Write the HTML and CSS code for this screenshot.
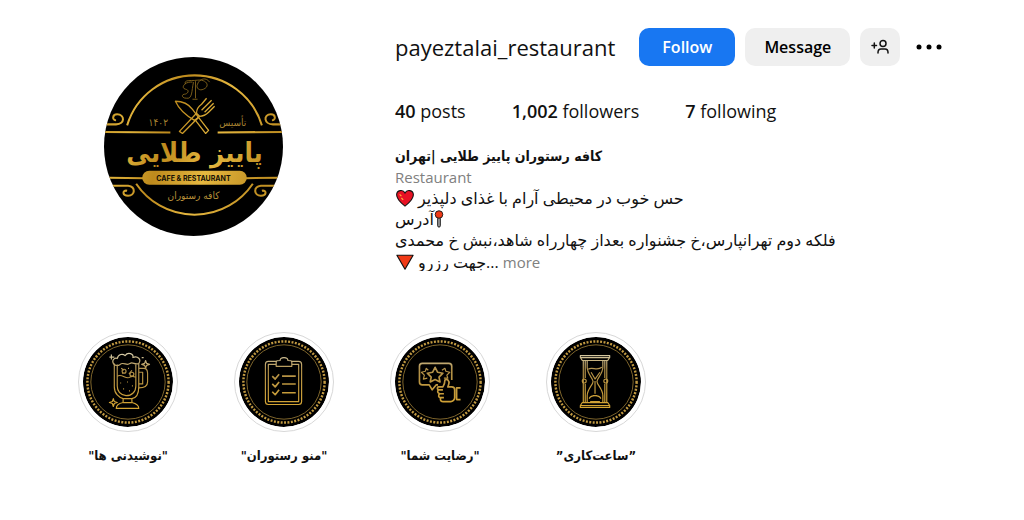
FILE: index.html
```html
<!DOCTYPE html>
<html lang="fa">
<head>
  <meta charset="UTF-8">
  <meta name="viewport" content="width=device-width, initial-scale=1">
  <title>payeztalai_restaurant</title>
  <link rel="stylesheet" href="styles.css">
</head>
<body>
  <main class="profile">
    <header class="profile-header">
      <!-- logo -->
      <a class="avatar" href="#">
        <svg viewBox="0 0 178 178" aria-hidden="true">
          <defs>
            <clipPath id="disc"><circle cx="89" cy="89" r="89"/></clipPath>
            <linearGradient id="gold" x1="0" y1="0" x2="178" y2="60" gradientUnits="userSpaceOnUse" spreadMethod="reflect">
              <stop offset="0" stop-color="#b98a1c"/>
              <stop offset=".25" stop-color="#e0b23a"/>
              <stop offset=".45" stop-color="#bd8a1d"/>
              <stop offset=".7" stop-color="#e6b840"/>
              <stop offset="1" stop-color="#c08f22"/>
            </linearGradient>
          </defs>
          <g clip-path="url(#disc)">
            <rect width="178" height="178" fill="#000"/>
            <g fill="none" stroke="url(#gold)" stroke-width="2">
              <path d="M23 68A70 70 0 0 1 157 68M32 126A70 70 0 0 0 148 126"/>
              <path d="M0 74.500L66 75M113 75L178 74.500M5 120L40 120.500M141 120.500L174 120"/>
              <path d="M0 67H12C21 67 21 57 13 57C8 57 8 63 12 63"/>
              <path d="M178 67H168C159 67 158 57 166 57C171 57 171 63 167 63"/>
              <path d="M8 128H24C32 129 31 138 24 138C18 138 18 132 23 133"/>
              <path d="M172 128H156C148 129 149 138 156 138C162 138 162 132 157 133"/>
            </g>
            <!-- knife and fork -->
            <g fill="none" stroke="url(#gold)" stroke-width="1.300" stroke-linejoin="round">
              <path d="M71 44C79 44 85 48 88 52L94 60L90 63C83 59 75 53 71 44Z"/>
              <path d="M91 63L94 60L104 73L101 76Z"/>
              <path d="M75 74L92 56L95 59L78 76Z"/>
              <path d="M92 56C92 52 94 49 97 47L102 41M95 59C99 59 102 57 104 55L110 49M97 53L107 43M100 55L109 46"/>
            </g>
            <!-- monogram -->
            <g fill="none" stroke="#93711f" stroke-width=".8">
              <path d="M81 27C79 22 87 24 93 23C102 22 106 29 99 32C95 34 91 31 93 27C95 21 102 20 105 25"/>
              <path d="M88 25C80 24 76 31 81 32C86 33 83 37 80 37C77 37 77 41 82 41C88 42 87 34 89 25M91 24V41M88 42H93"/>
            </g>
            <rect x="38" y="113" width="104" height="14" rx="7" fill="url(#gold)"/>
            <g class="logo-text" text-anchor="middle">
              <text class="logo-name" x="90" y="104">پاییز طلایی</text>
              <text class="logo-small" x="54" y="69">۱۴۰۲</text>
              <text class="logo-small" x="128" y="69">تأسیس</text>
              <text class="logo-latin" x="89" y="123">CAFE &amp; RESTAURANT</text>
              <text class="logo-sub" x="89" y="141">کافه رستوران</text>
            </g>
          </g>
        </svg>
      </a>

      <section class="info">
        <div class="title-row">
          <h1 class="username">payeztalai_restaurant</h1>
          <div class="actions">
            <button type="button" class="btn btn-follow">Follow</button>
            <button type="button" class="btn btn-message">Message</button>
            <button type="button" class="btn btn-icon" aria-label="Similar accounts">
              <svg viewBox="0 0 20 20" width="20" height="20" fill="none" stroke="#111" stroke-width="1.500" stroke-linecap="round" aria-hidden="true">
                <circle cx="13" cy="6.500" r="3"/>
                <path d="M8 16V15.500C8 13 9 12 11 12H15C17 12 18 13 18 15.500V16M2 8.500H6.500M4.300 6V11"/>
              </svg>
            </button>
          </div>
          <button type="button" class="more-options" aria-label="Options">
            <svg viewBox="0 0 26 8" width="26" height="8" aria-hidden="true">
              <circle cx="3" cy="4" r="2.500"/><circle cx="13" cy="4" r="2.500"/><circle cx="23" cy="4" r="2.500"/>
            </svg>
          </button>
        </div>

        <ul class="stats">
          <li><b>40</b> posts</li>
          <li><a href="#"><b>1,002</b> followers</a></li>
          <li><a href="#"><b>7</b> following</a></li>
        </ul>

        <div class="bio">
          <h2 class="full-name">کافه رستوران پاییز طلایی |تهران</h2>
          <p class="category">Restaurant</p>
          <p><svg class="emoji" viewBox="0 0 20 20" aria-hidden="true"><path d="M10 19C6 16 .700 11 .700 6.500C.700 1 8 .200 10 4.500C12 .200 19.300 1 19.300 6.500C19.300 11 14 16 10 19Z" fill="#e81224" stroke="#111" stroke-width="1.200"/><path d="M4 6L6 8M6 10L8 12" stroke="#ffb13b" stroke-width="1.300"/></svg>حس خوب در محیطی آرام با غذای دلپذیر</p>
          <p>آدرس<svg class="emoji emoji-pin" viewBox="0 0 10 20" aria-hidden="true"><rect x="3.500" y="8" width="3" height="11" rx="1.500" fill="#999" stroke="#111"/><circle cx="5" cy="5" r="4.200" fill="#f03a17" stroke="#111"/></svg></p>
          <p>فلکه دوم تهرانپارس،خ جشنواره بعداز چهارراه شاهد،نبش خ محمدی</p>
          <p class="last-line"><svg class="emoji" viewBox="0 0 20 20" aria-hidden="true"><path d="M1 2.500H19L10 18Z" fill="#f03a17" stroke="#111" stroke-width="1.300" stroke-linejoin="round"/></svg>جهت رزرو... <a class="more" href="#">more</a></p>
        </div>
      </section>
    </header>

    <!-- story highlights -->
    <nav class="highlights">
      <a class="highlight" href="#">
        <svg class="cover" viewBox="0 0 92 92" aria-hidden="true">
          <defs>
            <linearGradient id="shine" x1="0" y1="16" x2="0" y2="76" gradientUnits="userSpaceOnUse">
              <stop offset="0" stop-color="#d9cfae"/>
              <stop offset=".3" stop-color="#b08f48"/>
              <stop offset="1" stop-color="#d9a730"/>
            </linearGradient>
          </defs>
          <circle cx="46" cy="46" r="46"/>
          <circle class="dots" cx="46" cy="46" r="41.500"/>
          <circle class="ring" cx="46" cy="46" r="38"/>
          <g class="art">
            <path d="M32 27V51C32 58 37 62 41 63V67C36 68 34 70 34 73H57C57 70 54 68 50 67V63C55 62 57 58 57 51V27"/>
            <path d="M35 28V50C35 56 39 59 44 60C50 60 54 56 54 50V28M41 63H50M41 67H50"/>
            <path d="M57 32H62C65 32 66 34 66 37V46C66 50 63 52 57 52M57 36H61V48H57"/>
            <path d="M31 27C29 23 33 21 35 22C36 17 41 17 43 19C46 15 52 17 51 21C56 19 60 23 57 27C53 29 51 25 48 27C45 30 41 25 38 28C35 30 32 29 31 27Z"/>
            <path d="M35 40C40 37 44 44 48 41C51 39 52 41 54 41"/>
            <path d="M39 32L42 34M50 34L47 38M38 47H39M45 46H46M50 50H51M41 53H42M47 55H48M46 32H47M40 37H41"/>
            <circle cx="42" cy="35" r="2"/><circle cx="50" cy="38" r="2"/>
            <path d="M29 18V23M27 20.500H32M64 24L65 27L68 28L65 29L64 32L63 29L60 28L63 27ZM31 63L32 66L35 67L32 68L31 71L30 68L27 67L30 66ZM60 21H62"/>
          </g>
        </svg>
        <span class="label">"نوشیدنی ها"</span>
      </a>
      <a class="highlight" href="#">
        <svg class="cover" viewBox="0 0 92 92" aria-hidden="true">
          <circle cx="46" cy="46" r="46"/>
          <circle class="dots" cx="46" cy="46" r="41.500"/>
          <circle class="ring" cx="46" cy="46" r="38"/>
          <g class="art">
            <path d="M38 25H30C28 25 27 26 27 28V66C27 68 28 69 30 69H61C63 69 64 68 64 66V28C64 26 63 25 61 25H54"/>
            <path d="M38 28H30V66H61V28H54"/>
            <path d="M38 30V26C38 24 39 24 42 24C42 20 50 20 50 24C53 24 54 24 54 26V30Z"/>
            <path class="bold" d="M34 40L37 43L41 38M34 48L37 51L41 46M34 56L37 59L41 54M44 40H58M44 48H58M44 57H58"/>
          </g>
        </svg>
        <span class="label">"منو رستوران"</span>
      </a>
      <a class="highlight" href="#">
        <svg class="cover" viewBox="0 0 92 92" aria-hidden="true">
          <circle cx="46" cy="46" r="46"/>
          <circle class="dots" cx="46" cy="46" r="41.500"/>
          <circle class="ring" cx="46" cy="46" r="38"/>
          <g class="art">
            <path class="bold" d="M58 44V30C58 28 57 27 55 27H28C26 27 25 28 25 30V46C25 48 26 49 28 49H35L38 54L42 49H44"/>
            <path class="bold" d="M41 31L43.500 36L49 37L45 41L46 46L41 43.500L36 46L37 41L33 37L38.500 36Z"/>
            <path d="M34 34L32 32L31 35L27 36L30 39L29 43L33 42M48 34L51 32L52 35L56 36L53 39L54 42L50 42"/>
            <path class="bold" d="M44 51H49C51 48 51 46 51 44C53 42 56 45 55 48L54 51H58C60 51 61 52 61 54V62C61 64 59 66 57 66H49C46 66 46 63 47 62C44 62 44 59 46 58C43 57 43 55 45 54C43 54 43 52 44 51ZM45 54H49M46 58H50M47 62H50M67 52H63V64H67"/>
          </g>
        </svg>
        <span class="label">"رضایت شما"</span>
      </a>
      <a class="highlight" href="#">
        <svg class="cover" viewBox="0 0 92 92" aria-hidden="true">
          <circle cx="46" cy="46" r="46"/>
          <circle class="dots" cx="46" cy="46" r="41.500"/>
          <circle class="ring" cx="46" cy="46" r="38"/>
          <g class="art">
            <path d="M30 19H60V21L58 24H32L30 21ZM30 72H60V70L58 67H32L30 70ZM30 21H60M30 70H60"/>
            <path d="M33 24V67M35 24V42M35 48V67M55 24V42M55 48V67M57 24V67"/>
            <circle cx="34" cy="45" r="2"/><circle cx="56" cy="45" r="2"/>
            <path d="M37 24V31C37 38 43 42 43 45.500C43 49 37 53 37 60V67M53 24V31C53 38 47 42 47 45.500C47 49 53 53 53 60V67"/>
            <path d="M38 33C42 30 47 35 52 31M41 36L45 43L50 36M45 45V58M39 63C41 59 49 59 51 63M40 66H50M43 60H47"/>
          </g>
        </svg>
        <span class="label">”ساعت‌کاری”</span>
      </a>
    </nav>
  </main>
</body>
</html>
```
FILE: styles.css
```css
* {
  box-sizing: border-box;
}
body {
  margin: 0;
  background-color: #fff;
  color: #111;
  font-family: "Open Sans", "Noto Sans", "DejaVu Sans", sans-serif;
  font-size: 16px;
}
h1, h2, p, ul {
  margin: 0;
  padding: 0;
}
a {
  color: inherit;
  text-decoration: none;
}
.profile-header {
  display: flex;
  gap: 112px;
  padding: 28px 24px 0 104px;
}
.avatar {
  flex: none;
  width: 179px;
  margin-top: 29px;
}
.avatar svg {
  display: block;
  width: 100%;
}
.logo-text {
  fill: url(#gold);
  font-family: "DejaVu Sans Condensed", "DejaVu Sans", sans-serif;
}
.logo-name {
  font-size: 27px;
  font-weight: bold;
}
.logo-small {
  font-size: 10px;
  fill: #a88432;
}
.logo-sub {
  font-size: 10px;
  fill: #b8913a;
}
.logo-latin {
  font-family: Inter, "Open Sans", sans-serif;
  font-size: 7px;
  font-weight: bold;
  fill: #151005;
}
.info {
  flex: 1;
  min-width: 0;
}

/* username and buttons */
.title-row {
  display: flex;
  align-items: center;
  min-height: 38px;
}
.username {
  font-size: 22px;
  font-weight: 400;
  line-height: 38px;
}
.actions {
  display: flex;
  gap: 10px;
  margin-left: 24px;
}
button {
  border: none;
  padding: 0;
  background: none;
  cursor: pointer;
  font-family: inherit;
}
.btn {
  height: 38px;
  border-radius: 10px;
  background-color: #efefef;
  color: #000;
  font-size: 16px;
  font-weight: 600;
}
.btn-follow {
  padding: 0 23px;
  background-color: #1877f2;
  color: #fff;
}
.btn-message {
  padding: 0 19px;
}
.btn-icon {
  width: 40px;
  display: flex;
  align-items: center;
  justify-content: center;
}
.more-options {
  display: flex;
  margin-left: 16px;
}

.stats {
  display: flex;
  gap: 46px;
  margin-top: 32px;
  list-style: none;
  font-size: 18px;
  line-height: 26px;
}
.stats b {
  font-weight: 600;
}

/* bio */
.bio {
  margin-top: 21px;
  line-height: 21px;
}
.bio p {
  height: 21px;
  white-space: nowrap;
}
.full-name,
.label {
  font-family: "DejaVu Sans Condensed", "DejaVu Sans", sans-serif;
  font-weight: bold;
  line-height: 22px;
}
.full-name {
  font-size: 14px;
}
.category,
.more {
  color: #808080;
  font-size: 15px;
}
.bio .last-line {
  height: 20px;
  line-height: 22px;
  overflow: hidden;
}
.emoji {
  width: 20px;
  height: 18px;
  margin-right: 3px;
  vertical-align: -3px;
}
.emoji-pin {
  width: 10px;
  margin: 0;
}

/* highlights */
.highlights {
  display: flex;
  gap: 56px;
  padding: 61px 24px 24px 78px;
}
.highlight {
  display: flex;
  flex-direction: column;
  align-items: center;
  width: 100px;
}
.cover {
  width: 100px;
  height: 100px;
  padding: 4px;
  border: 1px solid #d8d8d8;
  border-radius: 50%;
}
.dots,
.ring {
  fill: none;
  stroke: #c29a42;
}
.dots {
  stroke-width: 2.5;
  stroke-dasharray: 2 1.5;
}
.ring {
  stroke-width: 1;
  stroke: #80662c;
}
.art {
  fill: none;
  stroke: url(#shine);
  stroke-width: 1.2;
  stroke-linejoin: round;
}
.art .bold {
  stroke-width: 1.7;
}
.label {
  margin-top: 13px;
  font-size: 13px;
  white-space: nowrap;
}
```
